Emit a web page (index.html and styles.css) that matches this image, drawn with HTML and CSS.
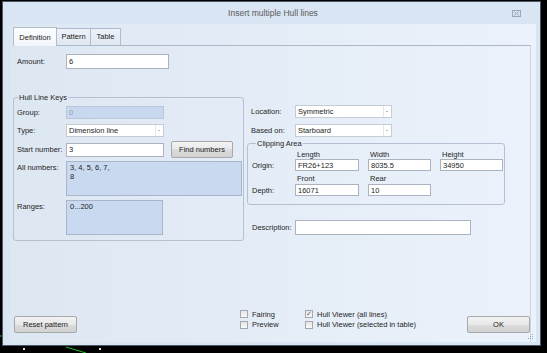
FILE: index.html
```html
<!DOCTYPE html>
<html lang="en">
<head>
    <meta charset="UTF-8">
    <title>Insert multiple Hull lines</title>
    <link rel="stylesheet" href="styles.css">
</head>
<body>
    <svg class="backdrop" width="547" height="353">
        <line x1="0" y1="336" x2="4" y2="336" stroke="#1fbf2f" stroke-width="1"/>
        <line x1="66" y1="347" x2="86" y2="353" stroke="#1fbf2f" stroke-width="1"/>
        <rect x="23" y="348" width="2" height="2" fill="#ddd"/>
        <rect x="99" y="348" width="2" height="2" fill="#ddd"/>
    </svg>

    <div class="window">
        <div class="titlebar">
            <span></span>
            <span class="title">Insert multiple Hull lines</span>
            <span class="close">
                <svg width="9" height="7" viewBox="0 0 9 7">
                    <rect x="0.5" y="0.5" width="8" height="6" fill="none" stroke="#9aa8ba"/>
                    <path d="M2 1.5 L7 5.5 M7 1.5 L2 5.5" stroke="#9aa8ba"/>
                </svg>
            </span>
        </div>

        <div class="client">
            <div class="tabs">
                <div class="tab active-tab">Definition</div>
                <div class="tab tab-pattern">Pattern</div>
                <div class="tab tab-table">Table</div>
            </div>

            <div class="page">
                <div class="row amount-row">
                    <label class="lbl">Amount:</label>
                    <input class="field amount" type="text" value="6">
                </div>

                <div class="main">
                    <fieldset class="group keys">
                        <legend>Hull Line Keys</legend>
                        <div class="row">
                            <label class="lbl">Group:</label>
                            <input class="field disabled w98" type="text" value="0" disabled>
                        </div>
                        <div class="row r-type">
                            <label class="lbl">Type:</label>
                            <div class="combo w98"><span>Dimension line</span><span class="arrow"></span></div>
                        </div>
                        <div class="row r-start">
                            <label class="lbl">Start number:</label>
                            <input class="field w98 tall" type="text" value="3">
                            <button class="btn find">Find numbers</button>
                        </div>
                        <div class="row r-all">
                            <label class="lbl top">All numbers:</label>
                            <div class="memo all">3, 4, 5, 6, 7,
8</div>
                        </div>
                        <div class="row r-ranges">
                            <label class="lbl top">Ranges:</label>
                            <div class="memo ranges">0...200</div>
                        </div>
                    </fieldset>

                    <div class="side">
                        <div class="srow">
                            <label class="slbl">Location:</label>
                            <div class="combo w97"><span>Symmetric</span><span class="arrow"></span></div>
                        </div>
                        <div class="srow r-based">
                            <label class="slbl">Based on:</label>
                            <div class="combo w97"><span>Starboard</span><span class="arrow"></span></div>
                        </div>

                        <fieldset class="group clip">
                            <legend>Clipping Area</legend>
                            <div class="clip-grid">
                                <span></span><span class="head">Length</span><span class="head">Width</span><span class="head">Height</span>
                                <label class="glbl">Origin:</label>
                                <input class="field small" type="text" value="FR26+123">
                                <input class="field small" type="text" value="8035.5">
                                <input class="field small" type="text" value="34950">
                                <span></span><span class="head second">Front</span><span class="head second">Rear</span><span></span>
                                <label class="glbl">Depth:</label>
                                <input class="field small" type="text" value="16071">
                                <input class="field small" type="text" value="10">
                                <span></span>
                            </div>
                        </fieldset>

                        <div class="srow r-desc">
                            <label class="slbl">Description:</label>
                            <input class="field desc" type="text" value="">
                        </div>
                    </div>
                </div>

                <div class="bottom">
                    <button class="btn wide">Reset pattern</button>
                    <div class="checks c1">
                        <div class="check"><span class="box"></span>Fairing</div>
                        <div class="check"><span class="box"></span>Preview</div>
                    </div>
                    <div class="checks c2">
                        <div class="check"><span class="box checked">&#10003;</span>Hull Viewer (all lines)</div>
                        <div class="check"><span class="box"></span>Hull Viewer (selected in table)</div>
                    </div>
                    <button class="btn wide ok">OK</button>
                </div>
            </div>

            <svg class="grip" width="6" height="6" viewBox="0 0 6 6">
                <rect x="4" y="0" width="1" height="1" fill="#9aa8b8"/>
                <rect x="2" y="2" width="1" height="1" fill="#9aa8b8"/>
                <rect x="4" y="2" width="1" height="1" fill="#9aa8b8"/>
                <rect x="0" y="4" width="1" height="1" fill="#9aa8b8"/>
                <rect x="2" y="4" width="1" height="1" fill="#9aa8b8"/>
                <rect x="4" y="4" width="1" height="1" fill="#9aa8b8"/>
            </svg>
        </div>
    </div>
</body>
</html>
```

FILE: styles.css
```css
* {
    box-sizing: border-box;
}
body {
    margin: 0;
    width: 547px;
    height: 353px;
    background: #000;
    font-family: 'Liberation Sans', Arial, sans-serif;
    font-size: 7.5px;
    color: #1e1e1e;
    position: relative;
    overflow: hidden;
}
.backdrop {
    position: absolute;
    left: 0;
    top: 0;
}
.window {
    position: relative;
    margin: 1px 0 0 2px;
    width: 539px;
    height: 345px;
    border: 1px solid #4a5868;
    background: #d9e5f2;
    padding: 0 4px 3px 7px;
    display: flex;
    flex-direction: column;
}
.titlebar {
    height: 22px;
    display: grid;
    grid-template-columns: 1fr auto 1fr;
    align-items: center;
}
.title {
    font-size: 8.5px;
    color: #5a5a5a;
}
.close {
    justify-self: end;
    padding-right: 15px;
    display: flex;
}
.client {
    position: relative;
    flex: 1;
    background: linear-gradient(to right, #dde7f2, #e6eef8 60%, #ebf2fb);
    padding: 3px 5px 0 3px;
    display: flex;
    flex-direction: column;
}
.tabs {
    display: flex;
    height: 18px;
    align-items: flex-end;
}
.tab {
    height: 17px;
    line-height: 16px;
    text-align: center;
    border: 1px solid #aebccd;
    border-bottom: none;
    background: linear-gradient(#edf2f8, #dfe7f1);
    color: #222;
    margin-left: -1px;
}
.active-tab {
    width: 44px;
    height: 19px;
    margin-left: 0;
    margin-bottom: -1px;
    background: linear-gradient(#fbfcfe, #f2f6fb);
    position: relative;
    z-index: 1;
    line-height: 19px;
}
.tab-pattern {
    width: 35px;
}
.tab-table {
    width: 31px;
}
.page {
    flex: 1;
    border-top: 1px solid #a9b8cb;
    border-right: 1px solid #c9d5e3;
    display: flex;
    flex-direction: column;
}
.row {
    display: flex;
    align-items: center;
}
.lbl {
    width: 49px;
    flex: none;
}
.lbl.top {
    align-self: flex-start;
    padding-top: 2px;
}
.amount-row {
    margin-top: 8px;
    padding-left: 4px;
}
.field {
    height: 13px;
    border: 1px solid #abb3bf;
    background: #fff;
    font: inherit;
    color: #1e1e1e;
    padding: 0 2px;
    margin: 0;
    outline: none;
}
.amount {
    width: 103px;
    height: 15px;
}
.w98 {
    width: 98px;
}
.w97 {
    width: 97px;
}
.tall {
    height: 14px;
}
.disabled {
    background: #c8d8ee;
    border-color: #b8c7da;
    color: #8c9db6;
}
.combo {
    height: 13px;
    border: 1px solid #c4ccd6;
    background: #fff;
    display: flex;
    align-items: center;
    padding-left: 2px;
}
.combo span:first-child {
    flex: 1;
}
.arrow {
    width: 8px;
    height: 11px;
    border-left: 1px solid #e4e8ee;
    position: relative;
}
.arrow::after {
    content: '';
    position: absolute;
    left: 2px;
    top: 5px;
    border-left: 1.5px solid transparent;
    border-right: 1.5px solid transparent;
    border-top: 1.5px solid #777;
}
.main {
    display: flex;
    margin-top: 24px;
    align-items: flex-start;
}
.group {
    border: 1px solid #b3c1d2;
    border-radius: 3px;
    margin: 0;
    min-width: 0;
}
.group legend {
    padding: 0 1px;
    line-height: 9px;
    color: #1e1e1e;
}
.keys {
    width: 231px;
    height: 148px;
    padding: 4px 0 0 3px;
}
.keys legend {
    margin-left: 1px;
}
.r-type {
    margin-top: 5px;
}
.r-start {
    margin-top: 4px;
}
.btn {
    font: inherit;
    color: #222;
    border: 1px solid #a8a8a8;
    border-radius: 2px;
    background: linear-gradient(#f3f3f3, #e8e8e8 50%, #dcdcdc 50%, #d2d2d2);
    padding: 0;
    margin: 0;
}
.find {
    width: 62px;
    height: 17px;
    margin-left: 7px;
}
.r-all {
    margin-top: 3px;
}
.memo {
    background: #c9d9ef;
    border: 1px solid #a7b6ca;
    white-space: pre;
    padding: 1px 3px;
    line-height: 9px;
    height: 35px;
}
.all {
    width: 176px;
}
.r-ranges {
    margin-top: 4px;
}
.ranges {
    width: 97px;
}
.side {
    margin-left: 3px;
    display: flex;
    flex-direction: column;
}
.srow {
    display: flex;
    align-items: center;
    padding-left: 4px;
}
.slbl {
    width: 44px;
    flex: none;
}
.side > .srow:first-child {
    margin-top: 12px;
}
.r-based {
    margin-top: 6px;
}
.clip {
    width: 258px;
    margin-top: 2px;
    padding: 0 0 8px 4px;
}
.clip legend {
    margin-left: 4px;
}
.clip-grid {
    display: grid;
    grid-template-columns: 34px 64px 63px 63px;
    column-gap: 9px;
    align-items: center;
}
.head {
    padding-left: 2px;
    line-height: 9px;
    padding-top: 2px;
}
.head.second {
    padding-top: 3px;
    padding-bottom: 1px;
}
.field.small {
    height: 12px;
    width: 100%;
    line-height: 10px;
}
.r-desc {
    margin-top: 15px;
    padding-left: 5px;
}
.r-desc .slbl {
    width: 43px;
}
.desc {
    width: 176px;
    height: 15px;
}
.bottom {
    margin-top: auto;
    margin-bottom: 9px;
    display: flex;
    align-items: flex-end;
}
.wide {
    width: 63px;
    height: 17px;
}
.bottom > .btn:first-child {
    margin-left: 1px;
}
.checks {
    align-self: flex-start;
    display: flex;
    flex-direction: column;
    margin-top: -7px;
}
.c1 {
    margin-left: 163px;
    width: 65px;
}
.check {
    display: flex;
    align-items: center;
    height: 10.5px;
}
.box {
    width: 8px;
    height: 8px;
    border: 1px solid #a3a8b0;
    background: linear-gradient(#e6e6e6, #f8f8f8);
    margin-right: 4px;
    font-size: 7px;
    line-height: 6px;
    text-align: center;
    color: #666;
}
.ok {
    margin-left: auto;
}
.grip {
    position: absolute;
    right: 2px;
    bottom: 2px;
}
```
